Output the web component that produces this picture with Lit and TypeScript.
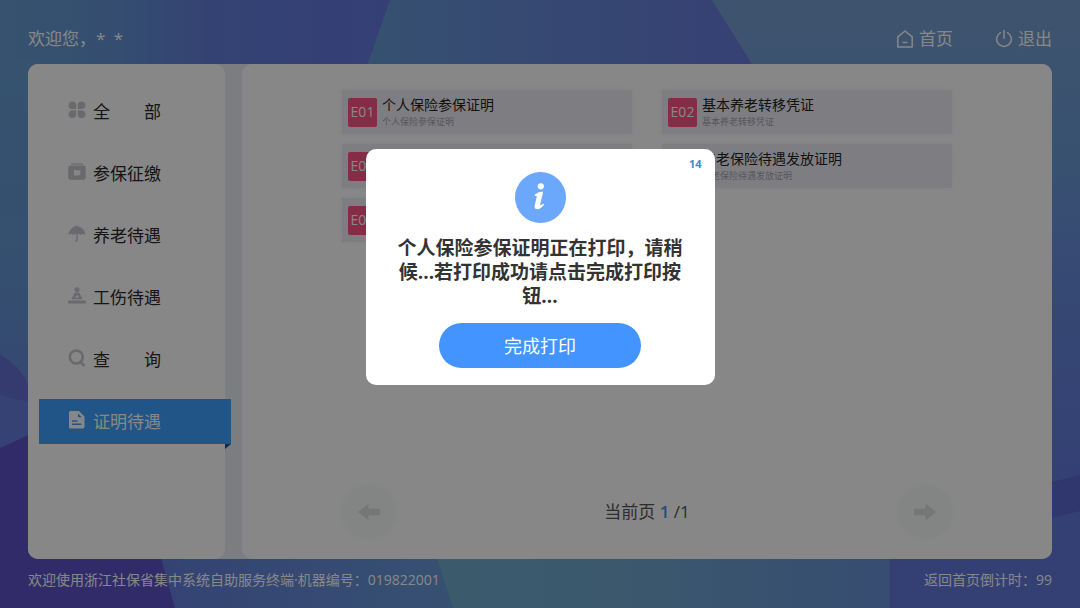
import { LitElement, html, css, svg, nothing } from "lit";
import { customElement, property, state } from "lit/decorators.js";
import { classMap } from "lit/directives/class-map.js";

const icons: Record<string, unknown> = {
  all: svg`<path d="M4.4 0.5a3.8 3.8 0 1 1 0 7.6 3.8 3.8 0 0 1 0-7.6zM13.6 0.5a3.8 3.8 0 1 1 0 7.6 3.8 3.8 0 0 1 0-7.6zM4.4 9.4a3.8 3.8 0 1 1 0 7.6 3.8 3.8 0 0 1 0-7.6zM13.6 9.4a3.8 3.8 0 1 1 0 7.6 3.8 3.8 0 0 1 0-7.6z"/><path d="M4.4 4.3H8.2V8.1H4.4zM9.8 4.3h3.8v3.8H9.8zM4.4 9.4h3.8v3.8H4.4zM9.8 9.4h3.8v3.8H9.8z"/>`,
  collect: svg`<path d="M3 .4h12v1.200H3z"/><path fill-rule="evenodd" d="M2.500 2.600h13a2.200 2.200 0 0 1 2.200 2.200v9.800a2.200 2.200 0 0 1-2.200 2.200h-13A2.200 2.200 0 0 1 .3 14.600V4.800a2.200 2.200 0 0 1 2.200-2.200zM6 6.500v6h4.700l1.600-1.500V6.500l-1.800 1.200z"/>`,
  umbrella: svg`<path d="M9 0v1.200C13.500 1.600 17 5 17.600 10c-1.600-1.300-3.400-1.300-4.800 0-1-.9-1.900-1.200-3.100-1v5.700a2.300 2.300 0 0 1-2.300 2.300V15.600a1 1 0 0 0 1-1V9c-1.200-.2-2.100.1-3.200 1C3.800 8.700 2 8.700.4 10 1 5 4.200 1.600 8.300 1.200V0z"/>`,
  injury: svg`<circle cx="9" cy="2.700" r="2.500"/><path fill-rule="evenodd" d="M6.600 5.800h4.800l3.200 6.500H3.400zM8 8.500l-1 2h4l-1-2z"/><path d="M1.500 13.400h15a1.600 1.600 0 0 1 0 3.200h-15a1.600 1.600 0 0 1 0-3.200z"/>`,
  search: svg`<circle cx="8.300" cy="8" r="6.500" fill="none" stroke="currentColor" stroke-width="2.600"/><path d="M12.500 12.800l3 3.200" stroke="currentColor" stroke-width="2.800" stroke-linecap="round"/>`,
  document: svg`<path fill-rule="evenodd" d="M2.500 0H11l5.500 5.500V15.800a1.700 1.700 0 0 1-1.700 1.700H2.500A1.500 1.500 0 0 1 1 16V1.500A1.500 1.500 0 0 1 2.500 0zM4 9.300v1.400h5.500V9.300zM4 12.600v1.400h9.500v-1.400zM10 2.500v3.700h3.800z"/>`,
  home: svg`<path d="M1.800 6.800L9 1l7.200 5.800V17H1.800z" fill="none" stroke="currentColor" stroke-width="1.500" stroke-linejoin="round"/><path d="M6.500 12.500h5" stroke="currentColor" stroke-width="1.500"/>`,
  power: svg`<path d="M5.500 2.700a7.300 7.300 0 1 0 7 0M9 .5v7.800" fill="none" stroke="currentColor" stroke-width="1.500" stroke-linecap="round"/>`,
  left: svg`<path d="M0 9L8.500 2v4.300H18v5.400H8.500V16z"/>`,
  right: svg`<path d="M18 9L9.500 2v4.300H0v5.400h9.500V16z"/>`,
};

const icon = (name: string) =>
  html`<svg class="icon" viewBox="0 0 18 18" fill="currentColor" aria-hidden="true">${icons[name]}</svg>`;

const fontStack = css`"Open Sans", "Noto Sans CJK SC", sans-serif`;

const shared = css`
  *,
  *::before,
  *::after {
    box-sizing: border-box;
  }
  button {
    font: inherit;
    color: inherit;
    border: 0;
    background: none;
    padding: 0;
    cursor: pointer;
  }
  .icon {
    display: block;
    flex: none;
    width: 18px;
    height: 18px;
  }
`;

@customElement("page-backdrop")
class PageBackdrop extends LitElement {
  static styles = css`
    :host,
    svg {
      display: block;
      width: 100%;
      height: 100%;
    }
  `;

  render() {
    return html`
      <svg viewBox="0 0 1080 608" preserveAspectRatio="none" aria-hidden="true">
        <defs>
          <linearGradient id="a">
            <stop offset="0" stop-color="#669cd0" />
            <stop offset=".3" stop-color="#6492d4" />
            <stop offset=".55" stop-color="#617dda" />
            <stop offset="1" stop-color="#6478de" />
          </linearGradient>
          <linearGradient id="b">
            <stop offset="0" stop-color="#6699d4" />
            <stop offset="1" stop-color="#6679dc" />
          </linearGradient>
          <linearGradient id="c" x2="0" y2="1">
            <stop offset="0" stop-color="#769fcf" />
            <stop offset=".3" stop-color="#6c9bd4" />
            <stop offset=".65" stop-color="#6686dc" />
            <stop offset="1" stop-color="#6279dc" />
          </linearGradient>
          <linearGradient id="d" x2="0" y2="1">
            <stop offset="0" stop-color="#669cd0" />
            <stop offset=".65" stop-color="#6495d3" />
            <stop offset="1" stop-color="#6686d8" />
          </linearGradient>
          <linearGradient id="e">
            <stop offset="0" stop-color="#70aecf" />
            <stop offset=".5" stop-color="#70a4cf" />
            <stop offset="1" stop-color="#6790d6" />
          </linearGradient>
          <linearGradient id="f">
            <stop offset="0" stop-color="#627ddc" />
            <stop offset="1" stop-color="#6999d6" />
          </linearGradient>
        </defs>
        <path fill="#6279dc" d="M0 0h1080v608H0z" />
        <path fill="url(#a)" d="M0 0h390l-28 80H0z" />
        <path fill="url(#b)" d="M390 0h322l50 80H362z" />
        <path fill="url(#c)" d="M712 0h368v475l-50 10V80H762z" />
        <path fill="url(#d)" d="M0 60h40v345L0 370z" />
        <path fill="#6470d0" d="M0 354q20 12 28 30l12 30v20L0 448z" />
        <path fill="#667cdb" d="M0 395l40 10v25L0 448z" />
        <path fill="#5e52c8" d="M0 448l40-18v110h118l17 68H0z" />
        <path fill="url(#f)" d="M156 540h275l22 68H175z" />
        <path fill="url(#e)" d="M431 540h459v68H453z" />
        <path fill="#5b67d0" d="M1040 485l40-10v36l-40 10z" />
      </svg>
    `;
  }
}

@customElement("side-nav")
class SideNav extends LitElement {
  @state() private current = "document";

  private items = [
    { id: "all", label: "全\u3000\u3000部" },
    { id: "collect", label: "参保征缴" },
    { id: "umbrella", label: "养老待遇" },
    { id: "injury", label: "工伤待遇" },
    { id: "search", label: "查\u3000\u3000询" },
    { id: "document", label: "证明待遇" },
  ];

  static styles = [
    shared,
    css`
      :host {
        display: block;
      }
      .nav {
        display: flex;
        flex-direction: column;
        gap: 17px;
        padding: 25px 0 0 11px;
        margin-right: -6px;
      }
      .item {
        position: relative;
        display: flex;
        align-items: center;
        gap: 7px;
        height: 45px;
        padding-left: 29px;
        font-size: 17px;
        line-height: 24px;
        color: #2a2a2a;
        text-align: left;
      }
      .item .icon {
        color: #c6c6d0;
        margin-bottom: 4px;
      }
      .active {
        background: #3fa0ff;
        color: #fff;
      }
      .active .icon {
        color: #fff;
      }
      .active::after {
        content: "";
        position: absolute;
        top: 100%;
        right: 0;
        border-top: 5px solid #1c5694;
        border-right: 6px solid transparent;
      }
    `,
  ];

  render() {
    return html`
      <nav class="nav">
        ${this.items.map(
          (item) => html`
            <button
              class=${classMap({ item: true, active: item.id === this.current })}
              @click=${() => (this.current = item.id)}
            >
              ${icon(item.id)}<span>${item.label}</span>
            </button>
          `
        )}
      </nav>
    `;
  }
}

@customElement("service-card")
class ServiceCard extends LitElement {
  @property() code = "";
  @property() name = "";

  static styles = [
    shared,
    css`
      :host {
        display: block;
      }
      .card {
        display: flex;
        align-items: center;
        gap: 5px;
        width: 100%;
        height: 44px;
        padding: 0 6px;
        background: #efeff6;
        box-shadow: 0 0 5px #f4f4f9;
        text-align: left;
      }
      .badge {
        display: grid;
        place-items: center;
        width: 29px;
        height: 29px;
        border-radius: 2px;
        background: #fb5685;
        color: #fff;
        font-size: 14px;
        line-height: 20px;
      }
      .text {
        display: flex;
        flex-direction: column;
      }
      .title {
        font-size: 14px;
        line-height: 20px;
        color: #222;
      }
      .sub {
        font-size: 9px;
        line-height: 14px;
        color: #a2a2aa;
      }
    `,
  ];

  render() {
    return html`
      <button class="card">
        <span class="badge">${this.code}</span>
        ${this.name
          ? html`<span class="text">
              <span class="title">${this.name}</span>
              <span class="sub">${this.name}</span>
            </span>`
          : nothing}
      </button>
    `;
  }
}

@customElement("print-dialog")
class PrintDialog extends LitElement {
  @property({ type: Number }) seconds = 14;

  static styles = [
    shared,
    css`
      :host {
        display: block;
      }
      .dialog {
        position: relative;
        display: flex;
        flex-direction: column;
        align-items: center;
        width: 349px;
        max-width: 100%;
        padding: 23px 28px 17px;
        border-radius: 10px;
        background: #fff;
      }
      .seconds {
        position: absolute;
        top: 7px;
        right: 13px;
        font-size: 11px;
        line-height: 16px;
        font-weight: 700;
        color: #3f8cca;
      }
      .info {
        display: block;
        width: 51px;
        height: 51px;
      }
      .message {
        margin: 13px 0 15px;
        font-size: 19px;
        line-height: 24px;
        font-weight: 700;
        text-align: center;
        color: #333;
      }
      .done {
        width: 202px;
        height: 45px;
        border-radius: 23px;
        background: #4394ff;
        color: #fff;
        font-size: 18px;
        line-height: 24px;
      }
    `,
  ];

  render() {
    return html`
      <div class="dialog" role="dialog" aria-modal="true" aria-labelledby="message">
        <span class="seconds">${this.seconds}</span>
        <svg class="info" viewBox="0 0 51 51" aria-hidden="true">
          <circle cx="25.500" cy="25.500" r="25.500" fill="#6ba8fc" />
          <circle cx="25.800" cy="14.300" r="3.100" fill="#fff" />
          <path
            d="M19.500 22.800q4-3.200 8.700-3.300l-2.900 12.600q-.3 1.500.8 1 1-.5 2-1.700l1 1.100q-3.400 4.900-7 4.700-3.200-.4-2.300-4.300l2-8.300q.2-1-1.400-.5z"
            fill="#fff"
          />
        </svg>
        <p class="message" id="message">个人保险参保证明正在打印，请稍候...若打印成功请点击完成打印按钮...</p>
        <button class="done">完成打印</button>
      </div>
    `;
  }
}

@customElement("app-root")
class AppRoot extends LitElement {
  private services = [
    { code: "E01", name: "个人保险参保证明" },
    { code: "E02", name: "基本养老转移凭证" },
    { code: "E03", name: "" },
    { code: "", name: "养老保险待遇发放证明" },
    { code: "E05", name: "" },
  ];

  static styles = [
    shared,
    css`
      :host {
        display: block;
        position: relative;
        min-height: 100vh;
        font-family: ${fontStack};
      }
      .backdrop {
        position: absolute;
        inset: 0;
      }
      .page {
        position: relative;
        display: flex;
        flex-direction: column;
        min-height: 100vh;
        padding: 0 28px;
        color: #fff;
      }
      .top {
        display: flex;
        align-items: center;
        justify-content: space-between;
        height: 64px;
        padding-top: 13px;
        font-size: 17px;
        line-height: 24px;
      }
      .actions {
        display: flex;
        gap: 42px;
      }
      .action {
        display: flex;
        align-items: center;
        gap: 5px;
        color: inherit;
        text-decoration: none;
      }
      .panel {
        flex: 1;
        display: grid;
        grid-template-columns: 197px 1fr;
        gap: 17px;
        border-radius: 10px;
        background: #ebecf4;
      }
      .side,
      .content {
        border-radius: 10px;
        background: #fff;
      }
      .content {
        display: flex;
        flex-direction: column;
        justify-content: space-between;
        padding: 26px 100px 20px;
      }
      .grid {
        display: grid;
        grid-template-columns: 1fr 1fr;
        gap: 10px 30px;
      }
      .pager {
        display: flex;
        align-items: center;
        justify-content: space-between;
        font-size: 17px;
        line-height: 24px;
        color: #555;
      }
      .turn {
        display: grid;
        place-items: center;
        width: 54px;
        height: 54px;
        border-radius: 50%;
        background: #f7f9fa;
        box-shadow: 0 0 6px #f9fafb;
        color: #dcdfe1;
      }
      .turn .icon {
        width: 22px;
        height: 22px;
      }
      .page-now {
        font-weight: 600;
        color: #3f93e0;
      }
      .bottom {
        display: flex;
        justify-content: space-between;
        height: 49px;
        padding-top: 11px;
        font-size: 14px;
        line-height: 20px;
      }
      .mask {
        position: absolute;
        inset: 0;
        display: flex;
        align-items: flex-start;
        justify-content: center;
        padding-top: 149px;
        background: rgba(0, 0, 0, 0.47);
      }
    `,
  ];

  render() {
    return html`
      <page-backdrop class="backdrop"></page-backdrop>
      <div class="page">
        <header class="top">
          <span>欢迎您，*\u2002*</span>
          <div class="actions">
            <a class="action" href="#home">${icon("home")}<span>首页</span></a>
            <a class="action" href="#exit">${icon("power")}<span>退出</span></a>
          </div>
        </header>
        <main class="panel">
          <side-nav class="side"></side-nav>
          <section class="content">
            <div class="grid">
              ${this.services.map(
                (s) => html`<service-card .code=${s.code} .name=${s.name}></service-card>`
              )}
            </div>
            <div class="pager">
              <button class="turn" aria-label="上一页">${icon("left")}</button>
              <span>当前页 <b class="page-now">1</b> /1</span>
              <button class="turn" aria-label="下一页">${icon("right")}</button>
            </div>
          </section>
        </main>
        <footer class="bottom">
          <span>欢迎使用浙江社保省集中系统自助服务终端·机器编号：019822001</span>
          <span>返回首页倒计时：99</span>
        </footer>
      </div>
      <div class="mask">
        <print-dialog .seconds=${14}></print-dialog>
      </div>
    `;
  }
}
